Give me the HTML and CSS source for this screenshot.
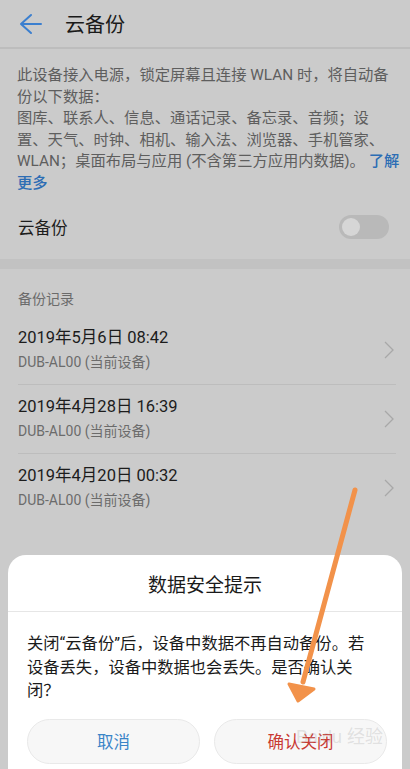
FILE: index.html
```html
<!DOCTYPE html>
<html lang="zh-CN">
<head>
  <meta charset="utf-8">
  <meta name="viewport" content="width=device-width,initial-scale=1.0">
  <title>云备份</title>
  <link rel="stylesheet" href="styles.css">
</head>
<body>
  <div class="header">
    <svg class="back" width="24" height="22" viewBox="0 0 24 22">
      <path d="M12 2 L2 11 L12 20 M2 11 H22" fill="none" stroke="#3b7fcf" stroke-width="2" stroke-linecap="round" stroke-linejoin="round"/>
    </svg>
    <span class="title">云备份</span>
  </div>

  <p class="desc">此设备接入电源，锁定屏幕且连接 WLAN 时，将自动备<br>份以下数据：<br>图库、联系人、信息、通话记录、备忘录、音频；设<br>置、天气、时钟、相机、输入法、浏览器、手机管家、<br>WLAN；桌面布局与应用 (不含第三方应用内数据)。 <span class="link">了解<br>更多</span></p>

  <div class="switch-row">
    <span>云备份</span>
    <span class="toggle"><span class="knob"></span></span>
  </div>

  <div class="band"></div>

  <div class="label">备份记录</div>

  <div class="record">
    <div>
      <div class="rec-title">2019年5月6日 08:42</div>
      <div class="rec-sub">DUB-AL00 (当前设备)</div>
    </div>
    <svg class="chev" width="10" height="18" viewBox="0 0 10 18"><path d="M1 1 L9 9 L1 17" fill="none" stroke="#a8a8a8" stroke-width="1.3"/></svg>
  </div>
  <div class="record">
    <div>
      <div class="rec-title">2019年4月28日 16:39</div>
      <div class="rec-sub">DUB-AL00 (当前设备)</div>
    </div>
    <svg class="chev" width="10" height="18" viewBox="0 0 10 18"><path d="M1 1 L9 9 L1 17" fill="none" stroke="#a8a8a8" stroke-width="1.3"/></svg>
  </div>
  <div class="record last">
    <div>
      <div class="rec-title">2019年4月20日 00:32</div>
      <div class="rec-sub">DUB-AL00 (当前设备)</div>
    </div>
    <svg class="chev" width="10" height="18" viewBox="0 0 10 18"><path d="M1 1 L9 9 L1 17" fill="none" stroke="#a8a8a8" stroke-width="1.3"/></svg>
  </div>

  <div class="dialog">
    <div class="dlg-title">数据安全提示</div>
    <p class="dlg-body">关闭“云备份”后，设备中数据不再自动备份。若<br>设备丢失，设备中数据也会丢失。是否确认关<br>闭？</p>
    <div class="buttons">
      <div class="btn cancel">取消</div>
      <div class="btn confirm">确认关闭</div>
    </div>
  </div>

  <div class="watermark">Baidu 经验</div>

  <svg class="arrow" width="410" height="769" viewBox="0 0 410 769">
    <line x1="355" y1="490" x2="303" y2="682" stroke="#f2924a" stroke-width="5" stroke-linecap="round"/>
    <path d="M289 684 L298 701 L314 689 Z" fill="#f2924a" stroke="#f2924a" stroke-width="3" stroke-linejoin="round"/>
  </svg>
</body>
</html>
```

FILE: styles.css
```css
body {
  margin: 0;
  width: 410px;
  height: 769px;
  overflow: hidden;
  position: relative;
  background: #cbcbcb;
  font-family: Roboto, "Noto Sans CJK SC", sans-serif;
  color: #1c1c1c;
}

.header {
  height: 47px;
  display: flex;
  align-items: center;
  padding-left: 19px;
  border-bottom: 2px solid #bdbdbd;
}
.header .title {
  font-size: 20px;
  margin-left: 22px;
  color: #1a1a1a;
}

.desc {
  margin: 0;
  padding: 16px 15px 0 17px;
  font-size: 15.3px;
  line-height: 21.5px;
  color: #5e5e5e;
  white-space: nowrap;
}
.link {
  color: #2c6db4;
  font-weight: 500;
}

.switch-row {
  height: 65px;
  display: flex;
  align-items: center;
  justify-content: space-between;
  padding: 0 21px 0 18px;
  font-size: 16.5px;
  color: #1c1c1c;
}
.toggle {
  width: 50px;
  height: 24px;
  border-radius: 12px;
  background: #b9b9b9;
  display: flex;
  align-items: center;
  padding-left: 3px;
  box-sizing: border-box;
}
.knob {
  width: 18px;
  height: 18px;
  border-radius: 50%;
  background: #d6d6d6;
}

.band {
  height: 10px;
  background: #c2c2c2;
}

.label {
  padding: 20px 18px 7px;
  font-size: 14px;
  line-height: 20px;
  color: #6b6b6b;
}

.record {
  margin: 0 14px 0 18px;
  height: 68px;
  display: flex;
  align-items: center;
  justify-content: space-between;
  border-bottom: 1px solid #bdbdbd;
}
.record.last {
  border-bottom: none;
}
.rec-title {
  font-size: 16.5px;
  line-height: 24px;
  color: #1c1c1c;
}
.rec-sub {
  font-size: 14px;
  line-height: 24px;
  color: #6b6b6b;
}
.chev {
  margin-right: 2px;
}

.dialog {
  position: absolute;
  left: 8px;
  right: 8px;
  top: 555px;
  height: 240px;
  background: #ffffff;
  border-radius: 18px;
}
.dlg-title {
  height: 56px;
  display: flex;
  align-items: center;
  justify-content: center;
  font-size: 19px;
  color: #1a1a1a;
  border-bottom: 1px solid #e6e6e6;
}
.dlg-body {
  margin: 0;
  padding: 20px 15px 0 19px;
  font-size: 16.3px;
  line-height: 23.5px;
  color: #1a1a1a;
  white-space: nowrap;
}
.buttons {
  display: flex;
  gap: 14px;
  padding: 16px 15px 0 19px;
}
.btn {
  flex: 1;
  height: 45px;
  border-radius: 23px;
  background: #f7f7f7;
  border: 1px solid #e9e9e9;
  box-sizing: border-box;
  display: flex;
  align-items: center;
  justify-content: center;
  font-size: 16.5px;
}
.cancel {
  color: #3a85c8;
}
.confirm {
  color: #c93a33;
}

.watermark {
  position: absolute;
  left: 296px;
  top: 726px;
  white-space: nowrap;
  font-family: "Liberation Sans", "Noto Sans CJK SC", sans-serif;
  font-size: 18px;
  line-height: 22px;
  color: rgba(170, 170, 170, 0.3);
}

.arrow {
  position: absolute;
  left: 0;
  top: 0;
  pointer-events: none;
}
```
